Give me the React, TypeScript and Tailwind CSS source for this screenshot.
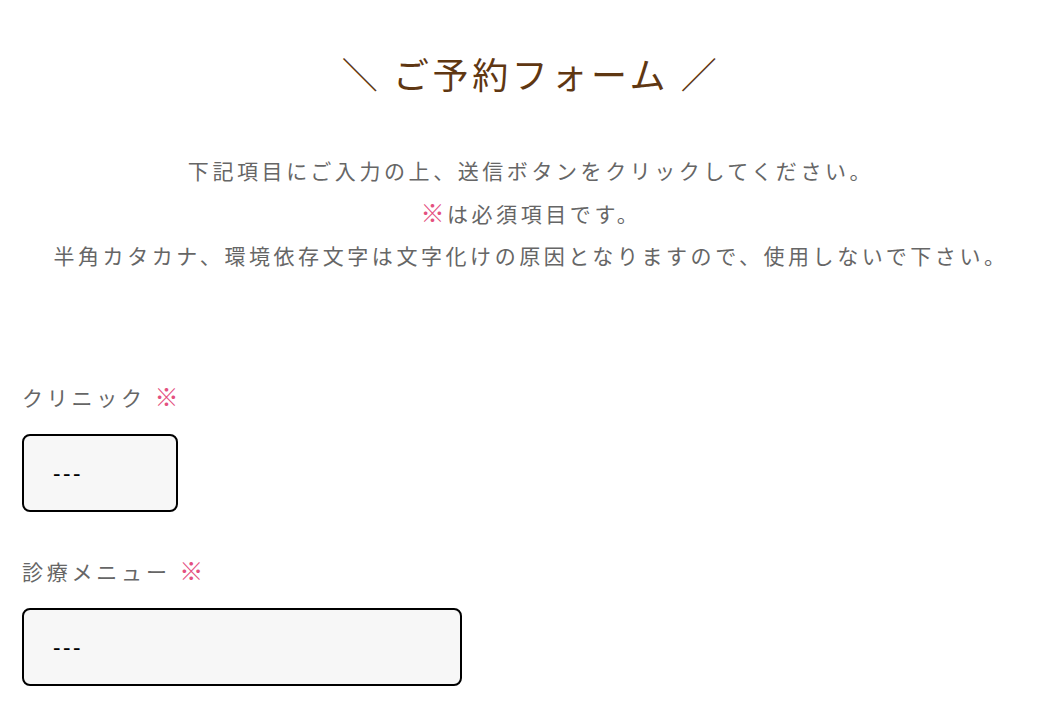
import React from "react";

const jp = "font-['Noto_Sans_CJK_JP','Noto_Sans',sans-serif]";

function Field({ label, width }: { label: string; width: string }) {
  return (
    <div className="flex flex-col">
      <label className="text-[21px] leading-[30px] tracking-[0.18em] text-[#666666]">
        {label} <span className="text-[24px] leading-none tracking-normal text-[#e4507f]">※</span>
      </label>
      <select
        className={`mt-[22px] h-[78px] ${width} appearance-none rounded-[8px] border-2 border-black bg-[#f7f7f7] pl-[29px] text-[21px] font-medium tracking-[0.12em] text-black outline-none ${jp}`}
        defaultValue=""
      >
        <option value="">---</option>
      </select>
    </div>
  );
}

export default function App() {
  return (
    <div className={`min-h-screen bg-white ${jp}`}>
      <h2 className="pt-[46px] text-center text-[36px] leading-[54px] tracking-[0.1em] text-[#5f3712]">
        ＼ ご予約フォーム ／
      </h2>
      <p className="mt-[49px] text-center text-[21px] leading-[42.5px] tracking-[0.17em] text-[#666666]">
        下記項目にご入力の上、送信ボタンをクリックしてください。
        <br />
        <span className="text-[24px] leading-none tracking-[0.1em] text-[#e4507f]">※</span>は必須項目です。
        <br />
        半角カタカナ、環境依存文字は文字化けの原因となりますので、使用しないで下さい。
      </p>
      <form className="mt-[105px] flex flex-col gap-[44px] px-[22px]">
        <Field label="クリニック" width="w-[156px]" />
        <Field label="診療メニュー" width="w-[440px]" />
      </form>
    </div>
  );
}
